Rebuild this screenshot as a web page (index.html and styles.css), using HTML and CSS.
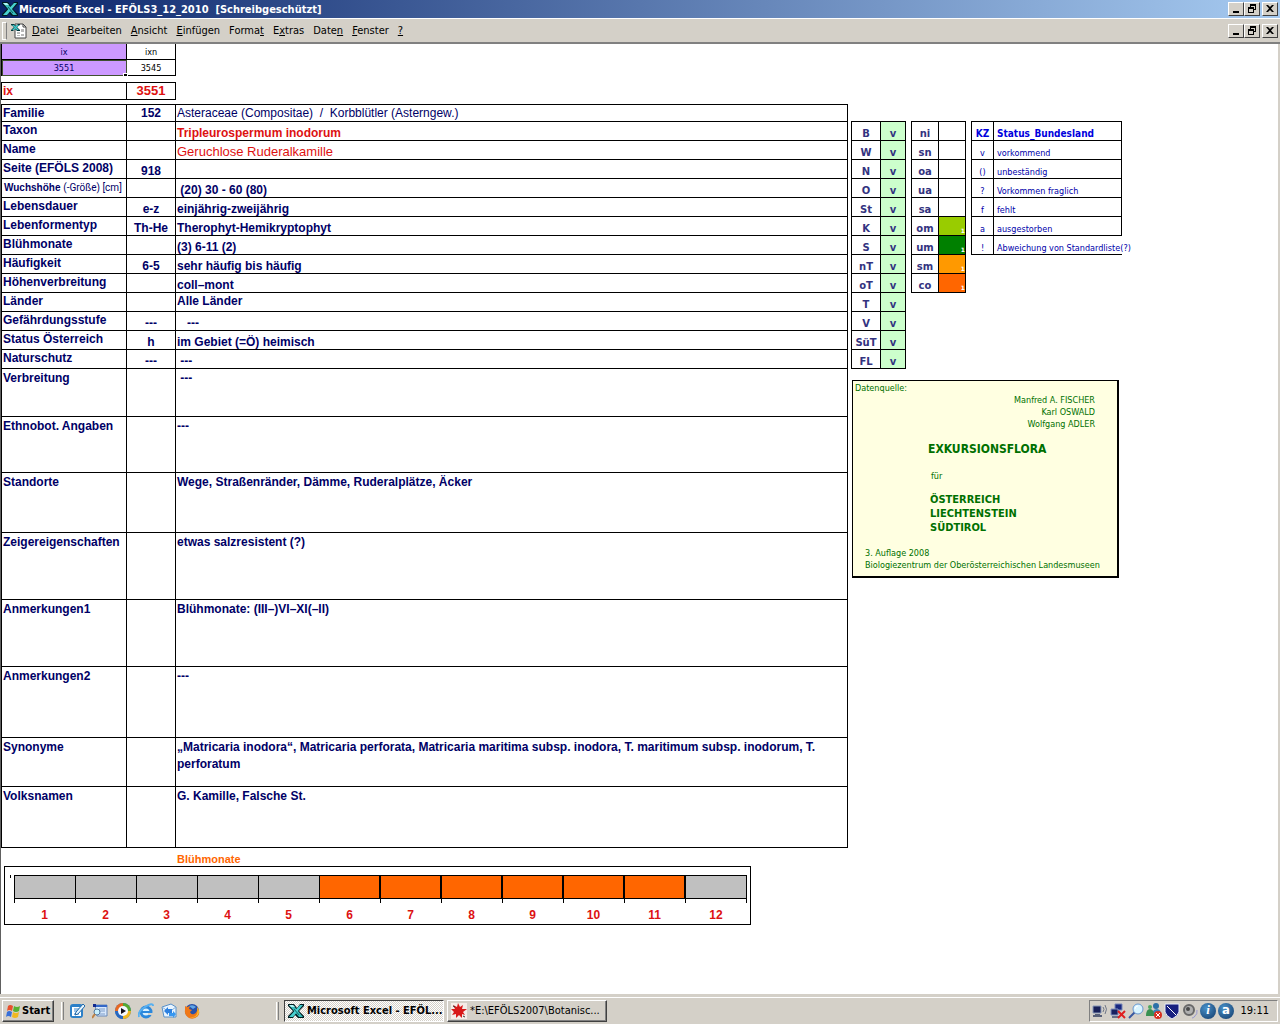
FILE: index.html
```html
<!DOCTYPE html>
<html lang="de">
<head>
  <meta charset="UTF-8">
  <meta name="viewport" content="width=device-width, initial-scale=1.0">
  <title>Microsoft Excel - EFÖLS3_12_2010</title>
  <link rel="stylesheet" href="styles.css">
</head>
<body>
  <svg width="0" height="0" class="defs">
    <symbol id="excel" viewBox="0 0 16 16">
      <path d="M0 1h6l3 4 3-4h4v2l-5 5 5 5v2h-6l-3-3-2 3H0v-2l5-5-5-5z" fill="#001c20"/>
      <path d="M1 2h4l10 12h-4z" fill="#38bcbc"/>
      <path d="M12 2h3L5 14H1z" fill="#48d0d0"/>
      <path d="M1 2h4l2 2H3z" fill="#b0f4f4"/>
      <path d="M6 6l5 6" stroke="#106868"/>
    </symbol>
    <symbol id="min" viewBox="0 0 12 10"><path d="M3 7h6v2H3z"/></symbol>
    <symbol id="restore" viewBox="0 0 12 10">
      <path d="M4 0h6v6H8V5h1V2H5v1H4zM2 3h6v6H2zm1 2v3h4V5z" fill-rule="evenodd"/>
    </symbol>
    <symbol id="close" viewBox="0 0 12 10">
      <path d="M2 1h2l2 2 2-2h2L7 4.500 10 8H8L6 6 4 8H2l3-3.500z"/>
    </symbol>
  </svg>

  <header class="title-bar">
    <svg class="icon"><use href="#excel"/></svg>
    <h1>Microsoft Excel - EFÖLS3_12_2010 &nbsp;[Schreibgeschützt]</h1>
    <div class="window-buttons">
      <button type="button" aria-label="Minimieren"><svg><use href="#min"/></svg></button>
      <button type="button" aria-label="Wiederherstellen"><svg><use href="#restore"/></svg></button>
      <button type="button" aria-label="Schließen" class="close"><svg><use href="#close"/></svg></button>
    </div>
  </header>

  <nav class="menu-bar">
    <span class="grip"></span>
    <svg class="icon" viewBox="0 0 16 16">
      <path d="M4 1h8l3 3v11H4z" fill="#fff" stroke="#444"/>
      <path d="M12 1v3h3" fill="none" stroke="#444"/>
      <path d="M6 9h3v2H6zM10 6h3v3h-3zM6 12h3v1H6zM10 11h3v2h-3z" fill="#b8b8b8"/>
      <path d="M0 1h3l2 2 2-2h2v1L6 4l3 3v1H6L4 6 2 8H0V7l3-3-3-2z" fill="#00383c"/>
      <path d="M1 2h2l5 5H6zM6 2h2L3 7H1z" fill="#40c8c8"/>
    </svg>
    <button type="button"><u>D</u>atei</button>
    <button type="button"><u>B</u>earbeiten</button>
    <button type="button"><u>A</u>nsicht</button>
    <button type="button"><u>E</u>infügen</button>
    <button type="button">Forma<u>t</u></button>
    <button type="button">E<u>x</u>tras</button>
    <button type="button">Date<u>n</u></button>
    <button type="button"><u>F</u>enster</button>
    <button type="button"><u>?</u></button>
    <div class="window-buttons">
      <button type="button" aria-label="Mappe minimieren"><svg><use href="#min"/></svg></button>
      <button type="button" aria-label="Mappe wiederherstellen"><svg><use href="#restore"/></svg></button>
      <button type="button" aria-label="Mappe schließen" class="close"><svg><use href="#close"/></svg></button>
    </div>
  </nav>

  <main class="sheet">
    <div class="left">
      <table class="grid index">
        <tr><td class="name violet">ix</td><td class="code">ixn</td></tr>
        <tr><td class="name violet selected">3551<span class="handle"></span></td><td class="code">3545</td></tr>
      </table>
      <table class="grid key">
        <tr><th scope="row" class="name">ix</th><td class="code">3551</td></tr>
      </table>

      <table class="grid record">
        <tr class="first"><th scope="row" class="name">Familie</th><td class="code">152</td><td class="family">Asteraceae (Compositae) &nbsp;/ &nbsp;Korbblütler (Asterngew.)</td></tr>
        <tr><th scope="row">Taxon</th><td></td><td class="red">Tripleurospermum inodorum</td></tr>
        <tr><th scope="row">Name</th><td></td><td class="plain red">Geruchlose Ruderalkamille</td></tr>
        <tr><th scope="row">Seite (EFÖLS 2008)</th><td>918</td><td></td></tr>
        <tr><th scope="row" class="small">Wuchshöhe <span>(-Größe) [cm]</span></th><td></td><td>&nbsp;(20) 30 - 60 (80)</td></tr>
        <tr><th scope="row">Lebensdauer</th><td>e-z</td><td>einjährig-zweijährig</td></tr>
        <tr><th scope="row">Lebenformentyp</th><td>Th-He</td><td>Therophyt-Hemikryptophyt</td></tr>
        <tr><th scope="row">Blühmonate</th><td></td><td>(3) 6-11 (2)</td></tr>
        <tr><th scope="row">Häufigkeit</th><td>6-5</td><td>sehr häufig bis häufig</td></tr>
        <tr><th scope="row">Höhenverbreitung</th><td></td><td>coll–mont</td></tr>
        <tr><th scope="row">Länder</th><td></td><td class="top">Alle Länder</td></tr>
        <tr><th scope="row">Gefährdungsstufe</th><td>---</td><td>&nbsp;&nbsp; ---</td></tr>
        <tr><th scope="row">Status Österreich</th><td>h</td><td>im Gebiet (=Ö) heimisch</td></tr>
        <tr><th scope="row">Naturschutz</th><td>---</td><td>&nbsp;---</td></tr>
        <tr class="tall verbreitung"><th scope="row">Verbreitung</th><td></td><td>&nbsp;---</td></tr>
        <tr class="tall ethno"><th scope="row">Ethnobot. Angaben</th><td></td><td>---</td></tr>
        <tr class="tall standorte"><th scope="row">Standorte</th><td></td><td>Wege, Straßenränder, Dämme, Ruderalplätze, Äcker</td></tr>
        <tr class="tall zeiger"><th scope="row">Zeigereigenschaften</th><td></td><td>etwas salzresistent (?)</td></tr>
        <tr class="tall zeiger"><th scope="row">Anmerkungen1</th><td></td><td>Blühmonate: (III–)VI–XI(–II)</td></tr>
        <tr class="tall anmerkungen"><th scope="row">Anmerkungen2</th><td></td><td>---</td></tr>
        <tr class="tall synonyme"><th scope="row">Synonyme</th><td></td><td>„Matricaria inodora“, Matricaria perforata, Matricaria maritima subsp. inodora, T. maritimum subsp. inodorum, T. perforatum</td></tr>
        <tr class="tall volksnamen"><th scope="row">Volksnamen</th><td></td><td>G. Kamille, Falsche St.</td></tr>
      </table>

      <h2>Blühmonate</h2>
      <div class="chart">
        <span class="axis"></span>
        <ol>
          <li><i></i>1</li>
          <li><i></i>2</li>
          <li><i></i>3</li>
          <li><i></i>4</li>
          <li><i></i>5</li>
          <li class="on"><i></i>6</li>
          <li class="on"><i></i>7</li>
          <li class="on"><i></i>8</li>
          <li class="on"><i></i>9</li>
          <li class="on"><i></i>10</li>
          <li class="on"><i></i>11</li>
          <li><i></i>12</li>
        </ol>
      </div>
    </div>

    <div class="right">
      <div class="tables">
        <table class="grid codes laender">
          <tr><th scope="row">B</th><td>v</td></tr>
          <tr><th scope="row">W</th><td>v</td></tr>
          <tr><th scope="row">N</th><td>v</td></tr>
          <tr><th scope="row">O</th><td>v</td></tr>
          <tr><th scope="row">St</th><td>v</td></tr>
          <tr><th scope="row">K</th><td>v</td></tr>
          <tr><th scope="row">S</th><td>v</td></tr>
          <tr><th scope="row">nT</th><td>v</td></tr>
          <tr><th scope="row">oT</th><td>v</td></tr>
          <tr><th scope="row">T</th><td>v</td></tr>
          <tr><th scope="row">V</th><td>v</td></tr>
          <tr><th scope="row">SüT</th><td>v</td></tr>
          <tr><th scope="row">FL</th><td>v</td></tr>
        </table>
        <table class="grid codes stufen">
          <tr><th scope="row">ni</th><td></td></tr>
          <tr><th scope="row">sn</th><td></td></tr>
          <tr><th scope="row">oa</th><td></td></tr>
          <tr><th scope="row">ua</th><td></td></tr>
          <tr><th scope="row">sa</th><td></td></tr>
          <tr><th scope="row">om</th><td class="om">1</td></tr>
          <tr><th scope="row">um</th><td class="um">1</td></tr>
          <tr><th scope="row">sm</th><td class="sm">1</td></tr>
          <tr><th scope="row">co</th><td class="co">1</td></tr>
        </table>
        <table class="grid status">
          <tr><th scope="col">KZ</th><th scope="col">Status_Bundesland</th></tr>
          <tr><td>v</td><td>vorkommend</td></tr>
          <tr><td>()</td><td>unbeständig</td></tr>
          <tr><td>?</td><td>Vorkommen fraglich</td></tr>
          <tr><td>f</td><td>fehlt</td></tr>
          <tr><td>a</td><td>ausgestorben</td></tr>
          <tr><td>!</td><td class="open">Abweichung von Standardliste(?)</td></tr>
        </table>
      </div>

      <div class="source">
        <p>Datenquelle:</p>
        <p class="authors">Manfred A. FISCHER<br>Karl OSWALD<br>Wolfgang ADLER</p>
        <h3>EXKURSIONSFLORA</h3>
        <p class="for">für</p>
        <h4>ÖSTERREICH<br>LIECHTENSTEIN<br>SÜDTIROL</h4>
        <p class="edition">3. Auflage 2008<br>Biologiezentrum der Oberösterreichischen Landesmuseen</p>
      </div>
    </div>
  </main>

  <footer class="taskbar">
    <button type="button" class="start">
      <svg class="icon" viewBox="0 0 16 16">
        <path d="M3 3q2-2 5 0L7 8q-3-2-5 0z" fill="#e8502c"/>
        <path d="M9 3q3 2 6 0l-1 5q-3 2-6 0z" fill="#58b030"/>
        <path d="M2 9q2-2 5 0l-1 5q-3-2-5 0z" fill="#3870d8"/>
        <path d="M8 9q3 2 6 0l-1 5q-3 2-6 0z" fill="#f0b820"/>
      </svg>
      Start
    </button>
    <span class="divider"></span>
    <div class="quick">
      <svg class="icon" viewBox="0 0 16 16">
        <rect x="1" y="1" width="13" height="14" rx="3" fill="#2c80c8"/>
        <rect x="3" y="4" width="9" height="9" fill="#fff"/>
        <path d="M5 6h5M5 8h4M5 11h5" stroke="#3c88d0"/>
        <path d="M14 1l2 2-7 8-3 1 1-3z" fill="#e4f4ff" stroke="#2068a8"/>
      </svg>
      <svg class="icon" viewBox="0 0 16 16">
        <path d="M3 2h12v11H5z" fill="#d8e8fc" stroke="#6888b8"/>
        <path d="M3 2h12v2H3z" fill="#3468c8"/>
        <path d="M7 6h6M8 8h5M8 11h5" stroke="#7c9cc8"/>
        <circle cx="5" cy="9" r="3" fill="#c8f0fc" stroke="#5078a0"/>
        <path d="M3 11l-3 4" stroke="#c08040" stroke-width="2"/>
        <path d="M1 1h3v3H1z" fill="#102890"/>
      </svg>
      <svg class="icon" viewBox="0 0 16 16">
        <circle cx="8" cy="8" r="8" fill="#3478d0"/>
        <path d="M8 0a8 8 0 0 0-8 8h8z" fill="#e86820"/>
        <path d="M8 0a8 8 0 0 1 8 8H8z" fill="#58a830"/>
        <path d="M0 8a8 8 0 0 0 8 8V8z" fill="#2868c0"/>
        <path d="M16 8a8 8 0 0 1-8 8V8z" fill="#f0b820"/>
        <circle cx="8" cy="8" r="5" fill="#f4f8ff"/>
        <path d="M6 5l5 3-5 3z" fill="#101018"/>
      </svg>
      <svg class="icon" viewBox="0 0 16 16">
        <circle cx="8" cy="9" r="5" fill="#d8f0ff" stroke="#2c88dc" stroke-width="3"/>
        <path d="M4 9h10" stroke="#2c88dc" stroke-width="2"/>
        <path d="M10 10h6v2h-6z" fill="#d4d0c8"/>
        <path d="M1 14Q-1 9 7 4t8-1" fill="none" stroke="#58b0f0" stroke-width="2"/>
      </svg>
      <svg class="icon" viewBox="0 0 16 16">
        <path d="M1 4l9-3 5 3v10H3z" fill="#e8f4ff" stroke="#5890c8"/>
        <path d="M1 4l7 5 7-5" fill="none" stroke="#88b0d8"/>
        <path d="M3 8l4-4v2h4v4H7v2z" fill="#2c80e0"/>
        <path d="M15 11l-3 4v-2H8v-3h4V8z" fill="#3898f0"/>
      </svg>
      <svg class="icon" viewBox="0 0 16 16">
        <circle cx="8" cy="8" r="7" fill="#2850a8"/>
        <path d="M5 3q4-2 7 1l-3 2z" fill="#60a8e8"/>
        <path d="M1 3l2 1 3-1-1 3 3 1-2 2q1 3 4 2 4-2 3-7 4 5 1 9-4 4-9 2-5-3-4-8z" fill="#f07818"/>
        <path d="M13 4q4 5 0 9-4 3-8 1 6 1 8-3 1-3 0-7z" fill="#f8c030"/>
      </svg>
    </div>
    <span class="divider"></span>
    <button type="button" class="task active"><svg class="icon"><use href="#excel"/></svg>Microsoft Excel - EFÖL...</button>
    <button type="button" class="task">
      <svg class="icon" viewBox="0 0 16 16">
        <path d="M0 0h16v16H0z" fill="#f4ece8"/>
        <path d="M7 0l2 4 3-2-1 4 5 0-4 3 2 3-3-1v4l-3-3-3 3V11l-4 1 2-3-3-3 4 0-2-4 4 2z" fill="#d81818"/>
        <path d="M2 3l2 1M12 13l2 1" stroke="#333"/>
      </svg>
      *E:\EFÖLS2007\Botanisc...
    </button>
    <div class="tray">
      <svg class="icon" viewBox="0 0 16 16">
        <path d="M1 3h8v7H1z" fill="#182058" stroke="#8898b8"/>
        <path d="M3 11h5v1h2v2H1v-2h2z" fill="#586078"/>
        <path d="M11 4q2 2 0 5M13 2q3 4 0 9" fill="none" stroke="#707888"/>
      </svg>
      <svg class="icon" viewBox="0 0 16 16">
        <path d="M5 1h7v6H5z" fill="#182880" stroke="#7888b8"/>
        <path d="M1 6h7v6H1z" fill="#182060" stroke="#8090c0"/>
        <path d="M2 13h7v2H2z" fill="#687088"/>
        <path d="M8 8l7 7M15 8l-7 7" stroke="#e02020" stroke-width="2"/>
      </svg>
      <svg class="icon" viewBox="0 0 16 16">
        <path d="M7 9l-6 6" stroke="#3858a0" stroke-width="2"/>
        <circle cx="10" cy="6" r="5" fill="#d8f4ff" stroke="#6898d0"/>
        <path d="M7 6q0-3 3-3" fill="none" stroke="#fff"/>
      </svg>
      <svg class="icon" viewBox="0 0 16 16">
        <circle cx="10" cy="3" r="3" fill="#2c70a8"/>
        <path d="M6 13q0-7 5-7 4 0 4 6z" fill="#3884b8"/>
        <circle cx="4" cy="4" r="2" fill="#50a860"/>
        <path d="M0 13q0-7 4-7t4 7z" fill="#389050"/>
        <circle cx="12" cy="12" r="4" fill="#d83020"/>
        <path d="M10 10l4 4M14 10l-4 4" stroke="#fff"/>
      </svg>
      <svg class="icon" viewBox="0 0 16 16">
        <path d="M1 1h14v8q-1 4-7 7-6-3-7-7z" fill="#182080" stroke="#e8ecf8"/>
        <path d="M3 3l9 9" stroke="#fff"/>
      </svg>
      <svg class="icon" viewBox="0 0 16 16">
        <circle cx="7" cy="7" r="5" fill="#b0b0b0" stroke="#686868" stroke-width="2"/>
        <circle cx="6" cy="6" r="2" fill="#484848"/>
        <path d="M12 14q4-3 3-7M10 15q2 0 3-2" fill="none" stroke="#9898d0"/>
      </svg>
      <span class="badge serif">i</span>
      <span class="badge">a</span>
      <time>19:11</time>
    </div>
  </footer>
</body>
</html>
```

FILE: styles.css
```css
* {
  box-sizing: border-box;
}
body {
  display: flex;
  flex-direction: column;
  min-height: 100vh;
  margin: 0;
  background: #d4d0c8;
  color: #000;
  font-family: "DejaVu Sans Condensed", "DejaVu Sans", sans-serif;
  font-size: 11px;
}
h1, h2, h3, h4, p, ol {
  margin: 0;
  padding: 0;
}
button {
  font-family: inherit;
  font-size: inherit;
  color: inherit;
}
.defs {
  position: absolute;
}
.icon {
  flex: none;
  width: 16px;
  height: 16px;
}

/* title and menu */
.title-bar {
  display: flex;
  align-items: center;
  height: 18px;
  padding: 0 2px;
  background: linear-gradient(to right, #0a246a, #a6caf0);
}
.title-bar h1 {
  flex: 1;
  margin-left: 1px;
  color: #fff;
  font-size: 11px;
}
.menu-bar {
  display: flex;
  align-items: center;
  height: 26px;
  padding: 0 2px;
  border-top: 1px solid #fff;
  border-bottom: 2px solid #808080;
}
.menu-bar > button {
  padding: 0;
  margin-left: 9px;
  border: 0;
  background: none;
}
.menu-bar > .icon {
  margin: 0 -4px 0 4px;
}
.grip {
  width: 5px;
  height: 18px;
  border: 1px solid #fff;
  border-right-color: #808080;
}
.window-buttons {
  display: flex;
  margin-left: auto;
}
.window-buttons button {
  display: flex;
  width: 16px;
  height: 14px;
  padding: 1px;
  border: 1px solid;
  border-color: #fff #404040 #404040 #fff;
  background: #d4d0c8;
}
.window-buttons .close {
  margin-left: 2px;
}
.window-buttons svg {
  width: 12px;
  height: 10px;
}

/* sheet */
.sheet {
  display: flex;
  flex: 1;
  align-items: flex-start;
  margin-right: 1px;
  border-left: 1px solid #606060;
  border-right: 1px solid #d4d0c8;
  background: #fff;
  color: #000066;
  font-family: "Liberation Sans", Arial, sans-serif;
}
.left {
  flex: none;
  width: 847px;
}
.grid {
  border-collapse: separate;
  border-spacing: 0;
  border-top: 1px solid #000;
  border-left: 1px solid #000;
  table-layout: fixed;
}
.grid th, .grid td {
  padding: 0;
  border-right: 1px solid #000;
  border-bottom: 1px solid #000;
}
.name {
  width: 125px;
}
.code {
  width: 49px;
}
.index {
  width: 175px;
  border-top: 0;
  font-family: "DejaVu Sans Condensed", sans-serif;
  font-size: 9px;
  line-height: 12px;
  text-align: center;
}
.index td {
  height: 16px;
}
.index .code {
  color: #000;
}
.index .violet {
  background: #cc99ff;
}
.index .selected {
  position: relative;
  outline: 1px solid #405030;
  outline-offset: -1px;
}
.handle {
  position: absolute;
  right: -2px;
  bottom: -2px;
  width: 5px;
  height: 4px;
  border: 1px solid #fff;
  background: #000;
}
.key {
  width: 175px;
  margin-top: 6px;
  color: #dd1111;
  font-size: 12px;
  font-weight: bold;
  line-height: 16px;
}
.key th {
  padding-left: 1px;
  text-align: left;
}
.key td {
  font-size: 13px;
  text-align: center;
}
.record {
  width: 100%;
  margin-top: 4px;
  font-size: 12px;
  font-weight: bold;
}
.record th, .record td {
  height: 19px;
  padding-left: 1px;
  line-height: 14px;
  text-align: left;
  vertical-align: bottom;
}
.record td:nth-child(2) {
  padding: 0;
  text-align: center;
}
.record th, .record .top, .record .tall > td {
  line-height: 17px;
  vertical-align: top;
}
.record .first > * {
  height: 17px;
  line-height: 16px;
}
.record .small {
  padding-left: 2px;
  font-size: 10px;
}
.record .small span {
  font-family: Roboto, sans-serif;
  font-weight: normal;
}
.record .family, .record .plain {
  font-weight: normal;
}
.record .plain {
  font-size: 13px;
}
.record .red {
  color: #dd1111;
}
.record .tall > * {
  padding-top: 1px;
}
.record .verbreitung > * {
  height: 48px;
}
.record .ethno > * {
  height: 56px;
}
.record .standorte > * {
  height: 60px;
}
.record .zeiger > * {
  height: 67px;
}
.record .anmerkungen > * {
  height: 71px;
}
.record .synonyme > * {
  height: 49px;
}
.record .volksnamen > * {
  height: 61px;
}

/* flowering months */
.left h2 {
  height: 18px;
  padding: 3px 0 0 176px;
  color: #ff6600;
  font-size: 11px;
  line-height: 16px;
}
.chart {
  display: flex;
  width: 747px;
  height: 59px;
  margin-left: 3px;
  padding: 8px 0 0 5px;
  border: 1px solid #000;
}
.axis {
  width: 4px;
  height: 3px;
  border-left: 1px solid #000;
}
.chart ol {
  display: flex;
  list-style: none;
}
.chart li {
  width: 61px;
  color: #dd1111;
  font-size: 12px;
  font-weight: bold;
  line-height: 33px;
  text-align: center;
}
.chart i {
  display: block;
  height: 24px;
  border: 1px solid #000;
  border-right: 0;
  background: #c0c0c0;
}
.chart i::after {
  content: "";
  display: block;
  height: 27px;
  margin-left: -1px;
  border-left: 1px solid #000;
}
.chart .on i {
  border-right: 1px solid #000;
  background: #ff6600;
}
.chart li:last-child {
  width: 62px;
}
.chart li:last-child i {
  border-right: 1px solid #000;
}
.chart li:last-child i::after {
  margin-right: -1px;
  border-right: 1px solid #000;
}

/* side tables */
.right {
  flex: 1;
  padding: 77px 0 0 3px;
}
.tables {
  display: flex;
  align-items: flex-start;
  gap: 5px;
}
.codes, .status {
  font-size: 10px;
  line-height: 12px;
}
.codes th, .codes td, .status th, .status td {
  height: 19px;
  vertical-align: bottom;
}
.codes {
  width: 55px;
  color: #333380;
  font-family: "DejaVu Sans", sans-serif;
  font-weight: bold;
  text-align: center;
}
.laender th {
  width: 29px;
}
.laender td {
  background: #ccffcc;
}
.stufen th {
  width: 27px;
}
.stufen td {
  color: #fff;
  font-size: 6px;
  line-height: 8px;
  text-align: right;
}
.stufen .om {
  background: #99cc00;
}
.stufen .um {
  background: #008000;
}
.stufen .sm {
  background: #ff9900;
}
.stufen .co {
  background: #ff6600;
}
.status {
  width: 151px;
  color: #0000aa;
  font-family: "DejaVu Sans Condensed", sans-serif;
  font-size: 9px;
}
.status th {
  color: #0000dd;
  font-size: 10px;
}
.status th:first-child {
  width: 22px;
}
.status td:first-child {
  text-align: center;
}
.status th + th, .status td + td {
  padding-left: 3px;
  text-align: left;
  white-space: nowrap;
}
.status .open {
  border-right: 0;
}

.source {
  width: 267px;
  height: 198px;
  margin: 11px 0 0 1px;
  padding: 1px 2px;
  border: 1px solid #000;
  border-right-width: 2px;
  border-bottom-width: 2px;
  background: #ffffe1;
  color: #007000;
  font-family: "DejaVu Sans Condensed", sans-serif;
  font-size: 9px;
  line-height: 12px;
}
.source .authors {
  padding-right: 20px;
  text-align: right;
}
.source h3 {
  margin: 11px 0 0 73px;
  font-size: 12px;
  line-height: 16px;
}
.source .for {
  margin: 13px 0 0 76px;
}
.source h4 {
  margin: 11px 0 0 75px;
  font-size: 11px;
  line-height: 14px;
}
.source .edition {
  margin: 12px 0 0 10px;
  white-space: nowrap;
}

/* taskbar */
.taskbar {
  display: flex;
  align-items: center;
  height: 30px;
  padding: 2px 2px 0;
  border-top: 1px solid #d4d0c8;
  box-shadow: inset 0 2px #d4d0c8, inset 0 3px #fff;
}
.start, .task {
  display: flex;
  align-items: center;
  height: 22px;
  border: 1px solid;
  border-color: #fff #404040 #404040 #fff;
  box-shadow: inset -1px -1px #808080;
  background: #d4d0c8;
}
.start {
  gap: 1px;
  width: 52px;
  padding: 0 2px;
  font-weight: bold;
}
.divider {
  width: 3px;
  height: 18px;
  margin: 0 5px 0 7px;
  border-left: 1px solid #fff;
  border-right: 1px solid #808080;
}
.quick {
  display: flex;
  gap: 7px;
  width: 200px;
}
.task {
  gap: 3px;
  width: 160px;
  margin-right: 3px;
  padding: 0 3px;
  white-space: nowrap;
}
.task.active {
  border-color: #404040 #fff #fff #404040;
  box-shadow: none;
  background: repeating-conic-gradient(#fff 0 25%, #d4d0c8 0 50%) 0 0 / 2px 2px;
  font-weight: bold;
}
.tray {
  display: flex;
  align-items: center;
  gap: 2px;
  width: 189px;
  height: 22px;
  margin-left: auto;
  padding-left: 2px;
  border: 1px solid;
  border-color: #808080 #fff #fff #808080;
}
.badge {
  width: 16px;
  height: 16px;
  border-radius: 50%;
  background: radial-gradient(circle at 6px 5px, #4890c8, #103868);
  color: #fff;
  font-size: 13px;
  font-weight: bold;
  line-height: 14px;
  text-align: center;
}
.serif {
  font-family: "Liberation Serif", serif;
  font-style: italic;
}
.tray time {
  margin: 0 8px 0 auto;
}
```
